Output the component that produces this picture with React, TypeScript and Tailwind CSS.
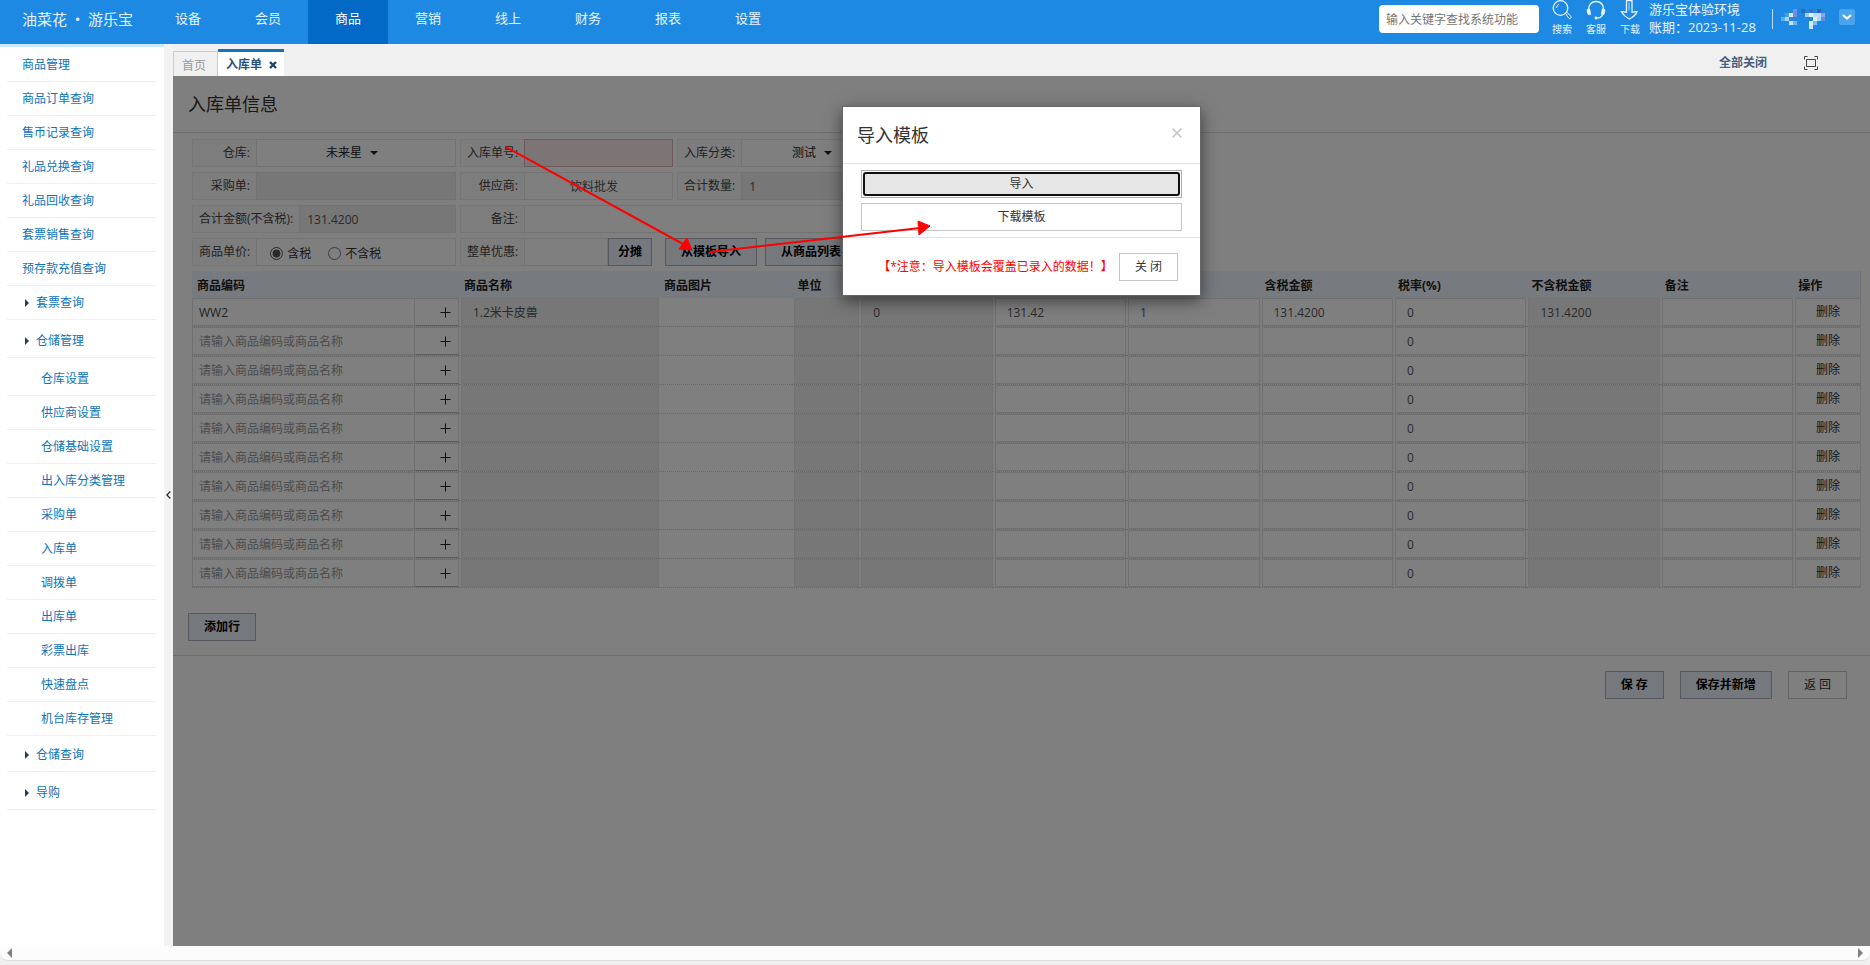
import type {ReactNode} from 'react';

const navItems = ['设备', '会员', '商品', '营销', '线上', '财务', '报表', '设置'];

const topLinks = [
  '商品管理',
  '商品订单查询',
  '售币记录查询',
  '礼品兑换查询',
  '礼品回收查询',
  '套票销售查询',
  '预存款充值查询',
];

const storageLinks = [
  '仓库设置',
  '供应商设置',
  '仓储基础设置',
  '出入库分类管理',
  '采购单',
  '入库单',
  '调拨单',
  '出库单',
  '彩票出库',
  '快速盘点',
  '机台库存管理',
];

const headers = [
  {text: '商品编码', width: 'w-[16%]'},
  {text: '商品名称', width: 'w-[12%]'},
  {text: '商品图片', width: 'w-[8%]'},
  {text: '单位', width: 'w-[4%]'},
  {text: '', width: 'w-[8%]'},
  {text: '', width: 'w-[8%]'},
  {text: '', width: 'w-[8%]'},
  {text: '含税金额', width: 'w-[8%]'},
  {text: '税率(%)', width: 'w-[8%]'},
  {text: '不含税金额', width: 'w-[8%]'},
  {text: '备注', width: 'w-[8%]'},
  {text: '操作', width: 'w-[4%]'},
];

type Row = {
  code?: string;
  name?: string;
  stock?: string;
  price?: string;
  count?: string;
  amount?: string;
  net?: string;
};

const rows: Row[] = [
  {code: 'WW2', name: '1.2米卡皮兽', stock: '0', price: '131.42', count: '1', amount: '131.4200', net: '131.4200'},
  ...Array.from({length: 9}, () => ({})),
];

// x, y and fill of each block in the masked user name
const nameBlocks: [number, number, string][] = [
  [0, 8, '#5cb0f2'], [4, 8, '#a9d6f8'], [4, 4, '#4a9fea'], [8, 4, '#d5ecfc'], [8, 8, '#3f7fd0'],
  [12, 0, '#6f8fe6'], [12, 4, '#7d88dd'], [8, 12, '#bfe3fb'], [12, 12, '#6db6f3'],
  [20, 0, '#2d68bd'], [24, 4, '#a9c9f6'], [28, 0, '#3572c8'], [28, 4, '#dff1fd'], [32, 4, '#c0d5f8'],
  [36, 0, '#3a5fb8'], [36, 4, '#b6dcfa'], [40, 4, '#8fa3e8'], [32, 8, '#e4f4ff'], [36, 8, '#a8d9fb'],
  [40, 8, '#5a90e2'], [28, 12, '#d8effe'], [32, 12, '#79bdf4'], [28, 16, '#c5e6fc'],
];

const primaryBtn = 'h-7 border border-[#acb1bd] bg-[#ebf0fb] px-[15px] font-bold text-black whitespace-nowrap';
const plainBtn = 'h-7 border border-[#c6c6c6] bg-white px-[15px] text-[#333] whitespace-nowrap';
const box = 'h-7 w-full min-w-0 border px-[7px] text-[#555]';

function Field({label, id, className, children}: {label: string; id: string; className: string; children: ReactNode}) {
  return (
    <div className={`flex h-7 ${className}`}>
      <label
        htmlFor={id}
        className="flex min-w-16 shrink-0 items-center justify-end border border-r-0 border-[#ececec] bg-[#fbfbfb] px-[6px] whitespace-nowrap text-[#444]"
      >
        {label}:
      </label>
      {children}
    </div>
  );
}

function Select({id, value}: {id: string; value: string}) {
  return (
    <div className="flex h-7 w-full items-center justify-center border border-[#e6e6e6] bg-white pr-2">
      <select id={id} className="appearance-none text-[#222] [field-sizing:content]">
        <option>{value}</option>
      </select>
      <span className="ml-2 border-x-4 border-t-4 border-x-transparent border-t-[#222]" />
    </div>
  );
}

function Cell({name, value, readOnly}: {name: string; value?: string; readOnly?: boolean}) {
  return (
    <td className="border-b border-dotted border-[#ccc] p-0 pl-0.5">
      <input
        aria-label={name}
        defaultValue={value}
        readOnly={readOnly}
        className={`block h-7 w-full border px-[11px] text-[#555] ${
          readOnly ? 'border-[#e6e6e6] bg-[#eee]' : 'border-[#e0e0e0] bg-white'
        }`}
      />
    </td>
  );
}

function SideLink({text, className}: {text: string; className: string}) {
  return (
    <li className={`flex items-center border-b border-[#f0f0f0] ${className}`}>
      <a href="#" className="text-[#0d73ba]">{text}</a>
    </li>
  );
}

function SideGroup({text, className}: {text: string; className: string}) {
  return (
    <li className={`flex items-center border-b border-[#f0f0f0] pl-[18px] ${className}`}>
      <span className="mr-[7px] border-y-4 border-l-4 border-y-transparent border-l-[#1d4260]" />
      <a href="#" className="text-[#0d73ba]">{text}</a>
    </li>
  );
}

function HeaderLink({text, children}: {text: string; children: ReactNode}) {
  return (
    <a href="#" className="flex w-5 flex-col items-center whitespace-nowrap">
      <svg width="20" height="20" viewBox="0 0 20 20" fill="none" stroke="currentColor" strokeWidth="1.3" className="mb-[3px]">
        {children}
      </svg>
      {text}
    </a>
  );
}

function Header() {
  return (
    <header className="flex h-11 shrink-0 bg-[#1e89e3] text-[#e6f5ff]">
      <div className="flex h-[38px] w-[148px] items-center pl-[22px] text-[15px]">
        <span>油菜花</span>
        <span className="w-[21px] text-center">•</span>
        <span>游乐宝</span>
      </div>
      <nav className="flex text-[13px]">
        {navItems.map((item) => (
          <a
            key={item}
            href="#"
            className={`flex w-20 justify-center pt-2 leading-5 ${item === '商品' ? 'bg-[#0269c6] text-white' : ''}`}
          >
            {item}
          </a>
        ))}
      </nav>
      <div className="ml-auto flex pr-[15px]">
        <input
          aria-label="查找系统功能"
          placeholder="输入关键字查找系统功能"
          className="mt-[5px] h-7 w-40 rounded-[4px] bg-white px-[7px] text-[12px] text-[#333] placeholder:text-[#757575]"
        />
        <div className="ml-[13px] flex gap-[14px] text-[10px] leading-3">
          <HeaderLink text="搜索">
            <circle cx="8.5" cy="8" r="7.3" />
            <path d="M4.500 8a4 4 0 0 1 2.500-3.700" strokeWidth="0.9" />
            <path d="M13.500 13.500l1.500-1.300 4 4.300c.5 1.500-.8 2.500-2 2z" strokeWidth="1" />
          </HeaderLink>
          <HeaderLink text="客服">
            <path d="M2.500 10C2.500 4.500 5.500 1.500 10 1.500s7.500 3 7.500 8.500" />
            <path d="M1 9.500l2.800-.7 1 5.500-1.800.7C1.500 14.500.8 12 1 9.500zM19 9.500l-2.800-.7-1 5.500 1.800.7c1.500-.5 2.200-3 2-5.500z" fill="currentColor" strokeWidth="0.5" />
            <path d="M16.500 15c-1 2-2.700 3-5.500 3.200" />
            <circle cx="10" cy="18" r="1.400" fill="currentColor" stroke="none" />
          </HeaderLink>
          <HeaderLink text="下载">
            <path d="M6.500.7h5.500v11.500l5-.5c-1 3-4.300 5.500-7.500 7.300C6 17 3 14.500 1.500 11.700l5 .5z" />
            <path d="M9 2.500v8" strokeWidth="0.7" />
          </HeaderLink>
        </div>
        <div className="ml-[9px] w-[111px] text-[13px] leading-[18px] whitespace-nowrap">
          <div>游乐宝体验环境</div>
          <div>账期：2023-11-28</div>
        </div>
        <div className="mt-[9px] ml-3 h-5 w-px bg-[#b5dcfa]" />
        <svg width="46" height="20" className="mt-[9px] ml-2" aria-hidden="true">
          {nameBlocks.map(([x, y, fill]) => (
            <rect key={`${x}-${y}`} x={x} y={y} width="4" height="4" fill={fill} />
          ))}
        </svg>
        <button
          type="button"
          aria-label="用户菜单"
          className="mt-[9px] ml-3 flex size-4 items-center justify-center rounded-[2px] bg-[#4ba3ec]"
        >
          <svg width="10" height="8" viewBox="0 0 10 8" fill="none" stroke="#fff" strokeWidth="2.2">
            <path d="M1 2l4 3.500L9 2" />
          </svg>
        </button>
      </div>
    </header>
  );
}

function Sidebar() {
  return (
    <aside className="w-[164px] shrink-0 border-t-[3px] border-[#cbe9fd] bg-white">
      <ul className="mr-2 ml-[7px] pt-px">
        {topLinks.map((text) => (
          <SideLink key={text} text={text} className="h-[34px] pl-[15px]" />
        ))}
        <SideGroup text="套票查询" className="h-[34px]" />
        <SideGroup text="仓储管理" className="h-[38px] pt-1" />
        <li>
          <ul className="pt-1 pb-0.5">
            {storageLinks.map((text) => (
              <SideLink key={text} text={text} className="h-[34px] pl-[34px]" />
            ))}
          </ul>
        </li>
        <SideGroup text="仓储查询" className="h-[34px]" />
        <SideGroup text="导购" className="h-[38px] pt-1" />
      </ul>
    </aside>
  );
}

function TabBar() {
  return (
    <div className="flex h-8 shrink-0 items-end pr-[52px]">
      <a href="#" className="flex h-[25px] w-[45px] items-center border border-b-0 border-[#ccc] pt-1 pl-2 text-[#999]">
        首页
      </a>
      <div className="flex h-[27px] w-[66px] items-center border-t-[3px] border-[#1274b8] bg-white pt-0.5 pl-2 font-bold text-[#2c5077]">
        入库单
        <button type="button" aria-label="关闭标签" className="ml-[7px]">
          <svg width="8" height="8" viewBox="0 0 8 8" stroke="#1d4268" strokeWidth="2.400">
            <path d="M1 1l6 6M7 1L1 7" />
          </svg>
        </button>
      </div>
      <button type="button" className="mb-[3px] ml-auto h-5 font-bold text-[#4a5f80]">全部关闭</button>
      <button type="button" aria-label="全屏" className="mb-1.5 ml-[37px]">
        <svg width="14" height="14" viewBox="0 0 14 14" fill="none" stroke="#444" className="block">
          <path d="M.5 3.500v-3h3M10.500.5h3v3M13.500 10.500v3h-3M3.500 13.500h-3v-3M2.500 3.500h9v7h-9z" />
        </svg>
      </button>
    </div>
  );
}

function OrderForm() {
  return (
    <form className="flex flex-col gap-[5px] pt-1.5 pl-[19px]">
      <div className="flex gap-1">
        <Field label="仓库" id="warehouse" className="w-[264px]">
          <Select id="warehouse" value="未来星" />
        </Field>
        <Field label="入库单号" id="order-no" className="w-[213px]">
          <input id="order-no" className={`${box} border-[#dfb4b4] bg-[#fbeaea]`} />
        </Field>
        <Field label="入库分类" id="category" className="w-[214px]">
          <Select id="category" value="测试" />
        </Field>
      </div>
      <div className="flex gap-1">
        <Field label="采购单" id="purchase" className="w-[264px]">
          <input id="purchase" readOnly className={`${box} border-[#e4e4e4] bg-[#eee]`} />
        </Field>
        <Field label="供应商" id="supplier" className="w-[213px]">
          <input id="supplier" defaultValue="饮料批发" className={`${box} border-[#e6e6e6] bg-white pr-4 text-center text-[#222]`} />
        </Field>
        <Field label="合计数量" id="total-count" className="w-[214px]">
          <input id="total-count" readOnly defaultValue="1" className={`${box} border-[#e4e4e4] bg-[#eee]`} />
        </Field>
      </div>
      <div className="flex gap-1">
        <Field label="合计金额(不含税)" id="total-amount" className="w-[264px]">
          <input id="total-amount" readOnly defaultValue="131.4200" className={`${box} border-[#e4e4e4] bg-[#eee]`} />
        </Field>
        <Field label="备注" id="remark" className="w-[431px]">
          <input id="remark" className={`${box} border-[#e6e6e6] bg-white`} />
        </Field>
      </div>
      <div className="flex">
        <Field label="商品单价" id="tax-in" className="mr-1 w-[264px]">
          <div className="flex h-7 w-full items-center border border-[#e6e6e6] bg-white pt-0.5 pl-[13px] text-[#333]">
            <input id="tax-in" type="radio" name="tax" defaultChecked className="mr-1 size-[13px] accent-[#555]" />
            <label htmlFor="tax-in" className="pt-0.5">含税</label>
            <input id="tax-out" type="radio" name="tax" className="mr-1 ml-[17px] size-[13px]" />
            <label htmlFor="tax-out" className="pt-0.5">不含税</label>
          </div>
        </Field>
        <Field label="整单优惠" id="discount" className="w-[148px]">
          <input id="discount" className={`${box} border-[#e6e6e6] bg-white`} />
        </Field>
        <button type="button" className="h-7 w-11 border border-[#acb1bd] bg-[#ebf0fb] font-bold text-black">分摊</button>
        <button type="button" className={`ml-[13px] ${primaryBtn}`}>从模板导入</button>
        <button type="button" className={`ml-2 ${primaryBtn}`}>从商品列表导入</button>
      </div>
    </form>
  );
}

function ItemTable() {
  return (
    <div className="mt-[5px] pr-[9px] pl-[19px]">
      <table className="w-full table-fixed border-separate border-spacing-0 border-r border-[#e4e4e4]">
        <thead>
          <tr className="h-[27px] bg-[#eff4fc] text-left text-[#222]">
            {headers.map((head, index) => (
              <th key={index} className={`p-0 pt-0.5 pl-[5px] font-bold ${head.width}`}>{head.text}</th>
            ))}
          </tr>
        </thead>
        <tbody>
          {rows.map((row, index) => (
            <tr key={index} className="h-[29px]">
              <td className="border-b border-dotted border-[#ccc] p-0">
                <div className="flex">
                  <input
                    aria-label="商品编码"
                    placeholder="请输入商品编码或商品名称"
                    defaultValue={row.code}
                    className="h-7 min-w-0 flex-1 border border-[#e0e0e0] bg-white px-[6px] text-[#444] placeholder:text-[#999]"
                  />
                  <button
                    type="button"
                    aria-label="选择商品"
                    className="flex h-7 w-11 items-center justify-end border border-l-0 border-[#e0e0e0] border-b-[#bbb] bg-white pt-px pr-[7px]"
                  >
                    <svg width="11" height="11" viewBox="0 0 11 11" stroke="#222">
                      <path d="M.5 5.500h10M5.500.5v10" />
                    </svg>
                  </button>
                </div>
              </td>
              <Cell name="商品名称" value={row.name} readOnly />
              <td className="border-b border-dotted border-[#ccc]" />
              <Cell name="单位" readOnly />
              <Cell name="库存" value={row.stock} readOnly />
              <Cell name="单价" value={row.price} />
              <Cell name="数量" value={row.count} />
              <Cell name="含税金额" value={row.amount} />
              <Cell name="税率" value="0" />
              <Cell name="不含税金额" value={row.net} readOnly />
              <Cell name="备注" />
              <td className="border-b border-dotted border-[#ccc] p-0 pl-0.5">
                <button type="button" className="block h-7 w-full border border-r-0 border-[#e0e0e0] bg-white text-[#333]">
                  删除
                </button>
              </td>
            </tr>
          ))}
        </tbody>
      </table>
    </div>
  );
}

function ImportModal() {
  return (
    <div className="absolute inset-0 bg-black/50 pt-[30px]">
      <div role="dialog" aria-label="导入模板" className="mx-auto w-[359px] border border-[#666] bg-white shadow-[0_5px_15px_rgba(0,0,0,0.5)]">
        <div className="flex h-[57px] items-center justify-between border-b border-[#e2e2e2] pr-[18px] pl-[14px]">
          <h4 className="text-[18px] text-[#333]">导入模板</h4>
          <button type="button" aria-label="关闭" className="mb-1">
            <svg width="10" height="10" viewBox="0 0 10 10" stroke="#ccc" strokeWidth="1.800">
              <path d="M.5.500l9 9M9.500.500l-9 9" />
            </svg>
          </button>
        </div>
        <div className="flex flex-col gap-[5px] px-[18px] pt-[6px] pb-1.5">
          <button type="button" className="h-7 w-full border border-[#acacac] bg-white p-px text-[#333]">
            <span className="flex h-full items-center justify-center rounded-[3px] border-2 border-[#101010] bg-[#e6e6e6]">
              导入
            </span>
          </button>
          <button type="button" className="h-7 w-full border border-[#c6c6c6] bg-white text-[#333]">下载模板</button>
        </div>
        <div className="flex items-center justify-end gap-1.5 border-t border-[#e2e2e2] pt-[15px] pr-[22px] pb-[14px]">
          <span className="whitespace-nowrap text-[#f00]">【*注意：导入模板会覆盖已录入的数据！】</span>
          <button type="button" className={plainBtn}>关 闭</button>
        </div>
      </div>
    </div>
  );
}

export default function App() {
  return (
    <div className="flex h-screen flex-col overflow-hidden bg-[#f0f0f0] font-['Open_Sans','Noto_Sans_CJK_SC',sans-serif] text-[12px]">
      <Header />
      <div className="flex min-h-0 flex-1">
        <Sidebar />
        <button type="button" aria-label="收起菜单" className="flex w-[9px] shrink-0 items-center justify-center bg-[#f2f2f2]">
          <svg width="5" height="8" viewBox="0 0 5 8" fill="none" stroke="#333" strokeWidth="1.300">
            <path d="M4.300.500L.9 4l3.400 3.500" />
          </svg>
        </button>
        <div className="flex min-w-0 flex-1 flex-col">
          <TabBar />
          <main className="relative min-h-0 flex-1 overflow-hidden bg-white">
            <div className="flex h-[57px] items-center border-b border-[#ddd] pl-[15px]">
              <h1 className="text-[18px] text-[#333]">入库单信息</h1>
            </div>
            <OrderForm />
            <ItemTable />
            <div className="mt-[25px] pl-[15px]">
              <button type="button" className={primaryBtn}>添加行</button>
            </div>
            <div className="mt-[14px] flex justify-end gap-4 border-t border-[#ddd] pt-[15px] pr-[23px]">
              <button type="button" className={primaryBtn}>保 存</button>
              <button type="button" className={primaryBtn}>保存并新增</button>
              <button type="button" className={plainBtn}>返 回</button>
            </div>
            <ImportModal />
            {/* Guide arrows */}
            <svg width="800" height="200" className="pointer-events-none absolute top-0 left-0" stroke="#f00" strokeWidth="2" aria-hidden="true">
              <path d="M333 71l177 97M537 176l210-24" />
              <path d="M519 174l-13-1 8-11zM757 150l-12-5 1 14z" fill="#f00" strokeWidth="1" />
            </svg>
          </main>
        </div>
      </div>
      {/* Horizontal scroll bar */}
      <div className="h-[19px] shrink-0 bg-[#f0f0f0]">
        <div className="flex h-[15px] items-center justify-between rounded-b-lg border-b border-[#ddd] bg-[#fcfcfc] px-[7px]">
          <span className="border-y-[5px] border-r-[5px] border-y-transparent border-r-[#808080]" />
          <span className="border-y-[5px] border-l-[5px] border-y-transparent border-l-[#808080]" />
        </div>
      </div>
    </div>
  );
}
